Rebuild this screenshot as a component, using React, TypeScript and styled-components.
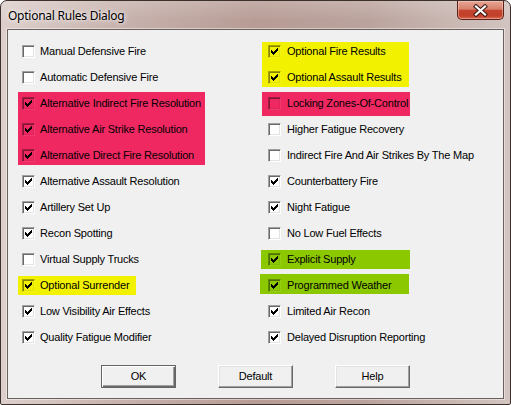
import React from 'react'
import styled, {createGlobalStyle, css} from 'styled-components'

const Global = createGlobalStyle`
  html, body {
    margin: 0;
    padding: 0;
    background: #ffffff;
  }
`

type Tone = 'pink' | 'yellow' | 'green'

const toneColors: Record<Tone, string> = {
  pink: '#f02862',
  yellow: '#f2f200',
  green: '#8cc800',
}

interface Rule {
  label: string
  checked: boolean
}

interface Block {
  tone?: Tone
  // how far the highlight reaches past the rows: top, right, bottom, left, and its width
  ext?: [number, number, number, number]
  width?: number
  rules: Rule[]
}

const leftColumn: Block[] = [
  {rules: [{label: 'Manual Defensive Fire', checked: false}]},
  {rules: [{label: 'Automatic Defensive Fire', checked: false}]},
  {
    tone: 'pink',
    ext: [3, 0, 1, 4],
    width: 187,
    rules: [
      {label: 'Alternative Indirect Fire Resolution', checked: true},
      {label: 'Alternative Air Strike Resolution', checked: true},
      {label: 'Alternative Direct Fire Resolution', checked: true},
    ],
  },
  {rules: [{label: 'Alternative Assault Resolution', checked: true}]},
  {rules: [{label: 'Artillery Set Up', checked: true}]},
  {rules: [{label: 'Recon Spotting', checked: true}]},
  {rules: [{label: 'Virtual Supply Trucks', checked: false}]},
  {tone: 'yellow', ext: [1, 0, 1, 4], width: 118, rules: [{label: 'Optional Surrender', checked: true}]},
  {rules: [{label: 'Low Visibility Air Effects', checked: true}]},
  {rules: [{label: 'Quality Fatigue Modifier', checked: true}]},
]

const rightColumn: Block[] = [
  {
    tone: 'yellow',
    ext: [1, 0, 1, 6],
    width: 147,
    rules: [
      {label: 'Optional Fire Results', checked: true},
      {label: 'Optional Assault Results', checked: true},
    ],
  },
  {tone: 'pink', ext: [3, 0, 4, 6], width: 148, rules: [{label: 'Locking Zones-Of-Control', checked: false}]},
  {rules: [{label: 'Higher Fatigue Recovery', checked: false}]},
  {rules: [{label: 'Indirect Fire And Air Strikes By The Map', checked: false}]},
  {rules: [{label: 'Counterbattery Fire', checked: true}]},
  {rules: [{label: 'Night Fatigue', checked: true}]},
  {rules: [{label: 'No Low Fuel Effects', checked: false}]},
  {tone: 'green', ext: [1, 0, 1, 7], width: 149, rules: [{label: 'Explicit Supply', checked: true}]},
  {tone: 'green', ext: [3, 0, 0, 8], width: 149, rules: [{label: 'Programmed Weather', checked: true}]},
  {rules: [{label: 'Limited Air Recon', checked: true}]},
  {rules: [{label: 'Delayed Disruption Reporting', checked: true}]},
]

const Window = styled.div`
  box-sizing: border-box;
  width: 511px;
  height: 405px;
  display: flex;
  flex-direction: column;
  border: 1px solid #3c302d;
  border-radius: 7px 7px 2px 2px;
  background: linear-gradient(
    to right,
    #ddd0cc 0%,
    #c8b3ae 22%,
    #b79c95 50%,
    #bba39d 72%,
    #d2c4c0 100%
  );
  padding: 0 6px 5px 6px;
  overflow: hidden;
`

const TitleBar = styled.div`
  height: 28px;
  display: flex;
  align-items: flex-start;
  margin: 0 -6px 0 -6px;
  padding: 0 6px 0 7px;
  background: linear-gradient(to bottom, rgba(255, 255, 255, 0.18), rgba(255, 255, 255, 0) 70%);
`

const Title = styled.div`
  flex: 1;
  padding-top: 7px;
  font-family: 'Noto Sans', 'Open Sans', sans-serif;
  font-size: 12px;
  line-height: 15px;
  letter-spacing: -0.25px;
  color: #000000;
  text-shadow: 0 0 6px rgba(255, 255, 255, 0.9), 0 0 3px rgba(255, 255, 255, 0.8);
`

const CloseButton = styled.div`
  box-sizing: border-box;
  width: 47px;
  height: 19px;
  display: flex;
  align-items: center;
  justify-content: center;
  border: 1px solid #5b2119;
  border-top: none;
  border-radius: 0 0 5px 5px;
  background: linear-gradient(to bottom, #e8a596 0%, #d7806c 45%, #c4452f 52%, #c23e28 80%, #d6634a 100%);
  box-shadow: inset 0 0 0 1px rgba(255, 220, 210, 0.45);
`

const Client = styled.div`
  flex: 1;
  display: flex;
  flex-direction: column;
  border: 1px solid #6a605d;
  background: #f0f0f0;
  box-shadow: 0 0 0 1px rgba(255, 255, 255, 0.45);
  font-family: 'Liberation Sans', Arial, sans-serif;
  font-size: 11px;
  letter-spacing: -0.2px;
  color: #000000;
`

const Columns = styled.div`
  display: grid;
  grid-template-columns: 246px 1fr;
  padding: 13px 0 0 14px;
`

const Column = styled.div<{$gap: number}>`
  display: flex;
  flex-direction: column;
  gap: 9px;
  --label-gap: ${({$gap}) => $gap}px;
`

const Group = styled.div<{$tone?: Tone; $ext?: [number, number, number, number]; $width?: number}>`
  display: flex;
  flex-direction: column;
  gap: 9px;
  ${({$tone, $ext, $width}) =>
    $tone &&
    $ext &&
    css`
      align-self: flex-start;
      box-sizing: border-box;
      width: ${$width}px;
      background: ${toneColors[$tone]};
      margin: ${-$ext[0]}px ${-$ext[1]}px ${-$ext[2]}px ${-$ext[3]}px;
      padding: ${$ext[0]}px ${$ext[1]}px ${$ext[2]}px ${$ext[3]}px;
    `}
`

const Row = styled.label`
  height: 17px;
  display: flex;
  align-items: center;
  gap: var(--label-gap);
  white-space: nowrap;
  line-height: 13px;
`

const Box = styled.span<{$tinted: boolean}>`
  box-sizing: border-box;
  width: 13px;
  height: 13px;
  flex: none;
  display: flex;
  align-items: center;
  justify-content: center;
  border: 1px solid;
  ${({$tinted}) =>
    $tinted
      ? css`
          border-color: rgba(0, 0, 0, 0.32) rgba(255, 255, 255, 0.08) rgba(255, 255, 255, 0.08) rgba(0, 0, 0, 0.32);
          box-shadow: inset 1px 1px 0 rgba(0, 0, 0, 0.45), inset -1px -1px 0 rgba(0, 0, 0, 0.06);
          background: transparent;
        `
      : css`
          border-color: #a0a0a0 #ffffff #ffffff #a0a0a0;
          box-shadow: inset 1px 1px 0 #696969, inset -1px -1px 0 #e3e3e3;
          background: #ffffff;
        `}
`

const Label = styled.span`
  padding-bottom: 1px;
`

const ButtonRow = styled.div`
  display: flex;
  justify-content: center;
  gap: 42px;
  padding-top: 19px;
`

const Button = styled.button<{$default?: boolean}>`
  box-sizing: border-box;
  width: 75px;
  height: 23px;
  padding: 0 0 1px 0;
  font-family: 'Liberation Sans', Arial, sans-serif;
  font-size: 11px;
  letter-spacing: -0.2px;
  color: #000000;
  background: #f0f0f0;
  border: 1px solid;
  border-color: #ffffff #696969 #696969 #ffffff;
  box-shadow: inset -1px -1px 0 #a0a0a0, inset 1px 1px 0 #e3e3e3;
  ${({$default}) =>
    $default &&
    css`
      border-color: #646464;
      box-shadow: inset 1px 1px 0 #ffffff, inset -1px -1px 0 #696969, inset -2px -2px 0 #a0a0a0;
    `}
`

// classic 7x7 tick, one 3px column per pixel step
const tickPath = [2, 3, 4, 3, 2, 1, 0].map((y, x) => `M${x} ${y}h1v3h-1z`).join('')

const Tick = () => (
  <svg width="7" height="7" viewBox="0 0 7 7" shapeRendering="crispEdges">
    <path d={tickPath} fill="#000000" />
  </svg>
)

const CheckRow = ({rule, tinted}: {rule: Rule; tinted: boolean}) => (
  <Row>
    <Box $tinted={tinted}>{rule.checked && <Tick />}</Box>
    <Label>{rule.label}</Label>
  </Row>
)

const RuleColumn = ({blocks, gap}: {blocks: Block[]; gap: number}) => (
  <Column $gap={gap}>
    {blocks.map((block, i) => (
      <Group key={i} $tone={block.tone} $ext={block.ext} $width={block.width}>
        {block.rules.map((rule) => (
          <CheckRow key={rule.label} rule={rule} tinted={!!block.tone} />
        ))}
      </Group>
    ))}
  </Column>
)

export default function App() {
  return (
    <>
      <Global />
      <Window>
        <TitleBar>
          <Title>Optional Rules Dialog</Title>
          <CloseButton>
            <svg width="15" height="13" viewBox="0 0 15 13">
              <path
                d="M3 2.5 L12 10.5 M12 2.5 L3 10.5"
                stroke="#3b1c16"
                strokeWidth="4.2"
                strokeLinecap="square"
              />
              <path
                d="M3 2.5 L12 10.5 M12 2.5 L3 10.5"
                stroke="#ffffff"
                strokeWidth="2.2"
                strokeLinecap="square"
              />
            </svg>
          </CloseButton>
        </TitleBar>
        <Client>
          <Columns>
            <RuleColumn blocks={leftColumn} gap={5} />
            <RuleColumn blocks={rightColumn} gap={6} />
          </Columns>
          <ButtonRow>
            <Button $default>OK</Button>
            <Button>Default</Button>
            <Button>Help</Button>
          </ButtonRow>
        </Client>
      </Window>
    </>
  )
}
